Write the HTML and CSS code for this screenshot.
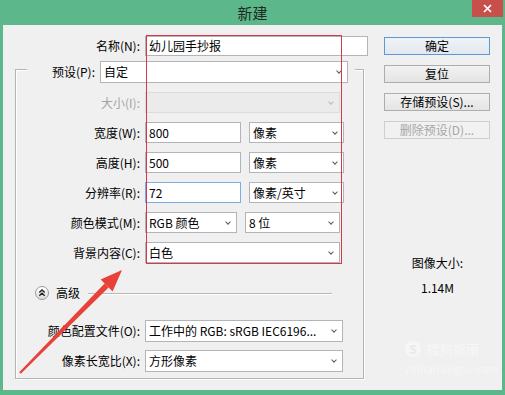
FILE: index.html
```html
<!DOCTYPE html>
<html lang="zh-CN">
  <head>
    <meta charset="UTF-8" />
    <title>新建</title>
    <link rel="stylesheet" href="styles.css">
  </head>
  <body>
    <div class="titlebar">
      <div class="title">新建</div>
      <div class="close">
        <svg width="9" height="9" viewBox="0 0 9 9"><path d="M1 1 L8 8 M8 1 L1 8" stroke="#fff" stroke-width="1.7" /></svg>
      </div>
    </div>

    <div class="dialog">
      <div class="main">
        <div class="name-row">
          <div class="label name-label">名称(N):</div>
          <div class="field name-field">幼儿园手抄报</div>
        </div>

        <div class="group">
          <div class="legend">
            <div class="label preset-label">预设(P):</div>
            <div class="field select preset-field">自定</div>
          </div>

          <div class="row">
            <div class="label disabled-text">大小(I):</div>
            <div class="field select disabled w-full"></div>
          </div>
          <div class="row">
            <div class="label">宽度(W):</div>
            <div class="field w-num">800</div>
            <div class="field select w-unit">像素</div>
          </div>
          <div class="row">
            <div class="label">高度(H):</div>
            <div class="field w-num">500</div>
            <div class="field select w-unit">像素</div>
          </div>
          <div class="row">
            <div class="label">分辨率(R):</div>
            <div class="field focus w-num">72</div>
            <div class="field select w-unit">像素/英寸</div>
          </div>
          <div class="row">
            <div class="label">颜色模式(M):</div>
            <div class="field select w-mode">RGB 颜色</div>
            <div class="field select w-unit">8 位</div>
          </div>
          <div class="row">
            <div class="label">背景内容(C):</div>
            <div class="field select w-full">白色</div>
          </div>

          <div class="advanced">
            <div class="adv-btn">
              <svg width="14" height="14" viewBox="0 0 14 14"><path d="M4.3 6.6 L7 4 L9.7 6.6 M4.3 9.8 L7 7.2 L9.7 9.8" fill="none" stroke="#222" stroke-width="1.4" /></svg>
            </div>
            <div class="adv-text">高级</div>
            <div class="adv-line"></div>
          </div>

          <div class="row tall first-adv">
            <div class="label">颜色配置文件(O):</div>
            <div class="field select w-wide">工作中的 RGB: sRGB IEC6196...</div>
          </div>
          <div class="row tall">
            <div class="label">像素长宽比(X):</div>
            <div class="field select w-wide">方形像素</div>
          </div>
        </div>
      </div>

      <div class="side">
        <div class="buttons">
          <div class="btn default">确定</div>
          <div class="btn">复位</div>
          <div class="btn">存储预设(S)...</div>
          <div class="btn disabled-btn">删除预设(D)...</div>
        </div>
        <div class="size-title">图像大小:</div>
        <div class="size-value">1.14M</div>
      </div>
    </div>

    <div class="highlight"></div>

    <svg class="arrow" width="505" height="395" viewBox="0 0 505 395">
      <polygon points="19.2,372.2 20.8,373.8 108.6,287.6 104.6,283.6" fill="#e8413a" />
      <polygon points="122,270 112.6,291.4 100.6,279.6" fill="#e8413a" />
    </svg>

    <div class="watermark">
      <div class="wm-top"><span class="wm-logo">S</span><span class="wm-name">搜狗指南</span></div>
      <div class="wm-url">zhinan.sogou.com</div>
    </div>
  </body>
</html>
```

FILE: styles.css
```css
body {
  margin: 0;
  width: 505px;
  height: 395px;
  overflow: hidden;
  position: relative;
  background-color: #5cb88a;
  font-family: "Noto Sans CJK SC", "Noto Sans", sans-serif;
  font-size: 12px;
  color: #000;
}
.titlebar {
  height: 25px;
  display: grid;
  grid-template-columns: 1fr auto 1fr;
  align-items: start;
}
.title {
  grid-column: 2;
  font-size: 15px;
  line-height: 25px;
  color: #1e2a22;
}
.close {
  grid-column: 3;
  justify-self: end;
  width: 31px;
  height: 17px;
  margin-right: 2px;
  background-color: #c8504b;
  display: flex;
  align-items: center;
  justify-content: center;
}
.dialog {
  margin: 0 3px;
  height: 365px;
  background-color: #f0f0f0;
  display: flex;
}
.main {
  width: 370px;
}
.side {
  flex: 1;
}
.label {
  text-align: right;
  white-space: nowrap;
  line-height: 20px;
}
.name-row {
  display: flex;
  align-items: center;
  gap: 5px;
  height: 20px;
  margin-top: 11px;
}
.name-label {
  width: 137px;
}
.name-field {
  width: 223px;
}
.field {
  box-sizing: border-box;
  height: 100%;
  border: 1px solid #b2b4b9;
  background-color: #fff;
  padding-left: 3px;
  display: flex;
  align-items: center;
  white-space: nowrap;
  overflow: hidden;
  line-height: 1;
}
.select::after {
  content: "";
  margin-left: auto;
  margin-right: 6px;
  flex: none;
  width: 3px;
  height: 3px;
  border-right: 1.6px solid #5a5a5a;
  border-bottom: 1.6px solid #5a5a5a;
  transform: translateY(-1px) rotate(45deg);
}
.focus {
  border-color: #7aaee0;
}
.disabled {
  background-color: #ebebeb;
  border-color: #dcdcdc;
}
.disabled::after {
  border-color: #b9b9b9;
}
.disabled-text {
  color: #a3a3a3;
}
.group {
  margin: 13px 0 0 12px;
  width: 349px;
  box-sizing: border-box;
  border: 1px solid #b4b4b4;
  box-shadow: inset 1px 1px 0 #fff, 1px 1px 0 #fff;
  padding-bottom: 6px;
}
.legend {
  display: flex;
  align-items: center;
  gap: 5px;
  height: 22px;
  width: 328px;
  box-sizing: border-box;
  margin: -9px 0 0 11px;
  padding-right: 7px;
  background-color: #f0f0f0;
}
.preset-label {
  width: 68px;
}
.preset-field {
  width: 248px;
}
.row {
  display: flex;
  align-items: center;
  gap: 5px;
  height: 21px;
  margin-top: 9px;
}
.row .label {
  width: 124px;
}
.row.tall {
  height: 22px;
  margin-top: 8px;
}
.row.first-adv {
  margin-top: 20px;
}
.w-full {
  width: 195px;
}
.w-num {
  width: 96px;
}
.w-unit {
  width: 95px;
  margin-left: 3px;
}
.w-mode {
  width: 92px;
}
.w-wide {
  width: 198px;
}
.advanced {
  display: flex;
  align-items: center;
  height: 14px;
  margin-top: 23px;
  padding-left: 19px;
}
.adv-btn {
  width: 14px;
  height: 14px;
  box-sizing: border-box;
  border: 1px solid #9a9a9a;
  border-radius: 50%;
  background: linear-gradient(#ffffff, #dcdcdc);
  display: flex;
  align-items: center;
  justify-content: center;
}
.adv-btn svg {
  margin: -1px;
}
.adv-text {
  margin-left: 7px;
  line-height: 14px;
}
.adv-line {
  flex: 1;
  height: 1px;
  margin: 0 31px 0 8px;
  background-color: #b8b8b8;
  box-shadow: 0 1px 0 #fff;
}
.buttons {
  display: flex;
  flex-direction: column;
  gap: 10px;
  margin: 12px 0 0 11px;
  width: 106px;
}
.btn {
  height: 18px;
  box-sizing: border-box;
  border: 1px solid #adadad;
  background: linear-gradient(#f2f2f2, #e4e4e4);
  text-align: center;
  line-height: 16px;
}
.btn.default {
  border-color: #5b9ad6;
  background: linear-gradient(#eef3f8, #e3e8ee);
}
.btn.disabled-btn {
  color: #a6a6a6;
  border-color: #cfcfcf;
  background: #f1f1f1;
}
.size-title {
  margin-top: 114px;
  text-align: center;
  line-height: 20px;
}
.size-value {
  margin-top: 5px;
  text-align: center;
  line-height: 20px;
}
.highlight {
  position: absolute;
  left: 146px;
  top: 35px;
  width: 196px;
  height: 229px;
  box-sizing: border-box;
  border: 1px solid #d8364b;
}
.arrow {
  position: absolute;
  left: 0;
  top: 0;
}
.watermark {
  position: absolute;
  left: 405px;
  top: 340px;
  color: #f7f7f7;
}
.wm-top {
  display: flex;
  align-items: center;
  gap: 6px;
  height: 18px;
}
.wm-logo {
  width: 16px;
  height: 16px;
  border-radius: 50%;
  background-color: #f6f6f6;
  color: #e8e8e8;
  text-align: center;
  font-size: 12px;
  line-height: 16px;
  font-weight: bold;
}
.wm-name {
  font-size: 13px;
  line-height: 16px;
}
.wm-url {
  margin-top: 5px;
  font-size: 10px;
  line-height: 11px;
  letter-spacing: 0.5px;
}
```
